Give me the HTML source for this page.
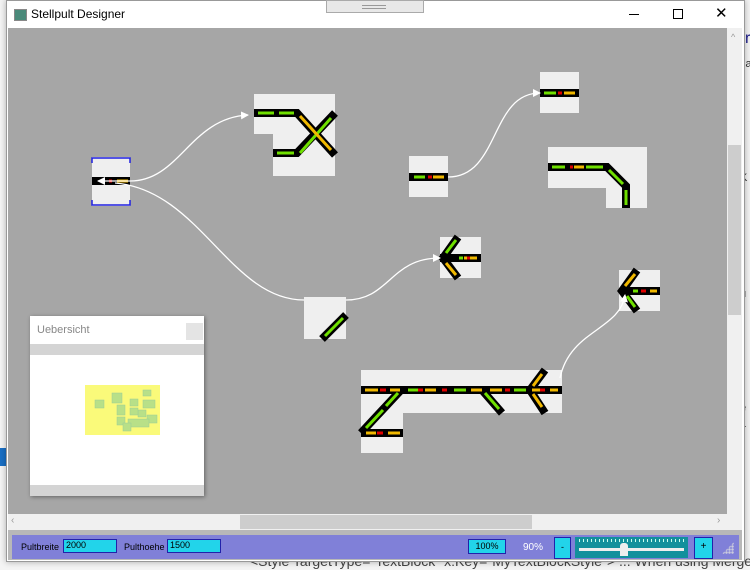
<!DOCTYPE html>
<html><head><meta charset="utf-8"><style>
body{margin:0;width:750px;height:570px;overflow:hidden;background:#fff;font-family:"Liberation Sans",sans-serif;position:relative}
.abs{position:absolute}
</style></head><body>
<div class="abs" style="left:0;top:0;width:750px;height:570px;background:#f4f4f4"></div>
<div class="abs" style="left:0;top:448px;width:8px;height:18px;background:#1a6fc4"></div>
<div class="abs" style="left:745px;top:30px;font-size:16px;color:#1a1a8a">r</div>
<div class="abs" style="left:740px;top:58px;font-size:11px;color:#333">sa</div>
<div class="abs" style="left:740px;top:172px;font-size:11px;color:#333">K</div>
<div class="abs" style="left:740px;top:288px;font-size:11px;color:#333">u</div>
<div class="abs" style="left:740px;top:402px;font-size:11px;color:#333">e</div>
<div class="abs" style="left:740px;top:418px;font-size:11px;color:#333">L</div>
<div class="abs" style="left:250px;top:553px;font-size:14px;color:#444;white-space:nowrap">&lt;Style TargetType="TextBlock" x:Key="MyTextBlockStyle"&gt; ... When using Merged dic</div>
<div class="abs" style="left:6px;top:0;width:737px;height:560px;background:#fff;border:1px solid #999;box-shadow:0 0 6px rgba(0,0,0,.3)"></div>
<div class="abs" style="left:326px;top:0;width:96px;height:11px;background:#e8e8e8;border:1px solid #aaa"></div>
<div class="abs" style="left:362px;top:5px;width:24px;height:2px;border-top:1px solid #999;border-bottom:1px solid #999"></div>
<div class="abs" style="left:14px;top:9px;width:11px;height:10px;background:#4a8a7a;border:1px solid #888"></div>
<div class="abs" style="left:31px;top:7px;font-size:12px;color:#000">Stellpult Designer</div>
<div class="abs" style="left:629px;top:14px;width:10px;height:1px;background:#000"></div>
<div class="abs" style="left:673px;top:9px;width:8px;height:8px;border:1px solid #000"></div>
<div class="abs" style="left:715px;top:4px;font-size:15px;color:#000">✕</div>
<div class="abs" style="left:8px;top:28px;width:719px;height:486px;background:#a6a6a6"></div>
<div class="abs" style="left:727px;top:28px;width:15px;height:486px;background:#f0f0f0"></div>
<div class="abs" style="left:728px;top:145px;width:13px;height:170px;background:#cdcdcd"></div>
<div class="abs" style="left:731px;top:32px;font-size:9px;color:#999">^</div>
<div class="abs" style="left:8px;top:514px;width:734px;height:16px;background:#f0f0f0"></div>
<div class="abs" style="left:240px;top:515px;width:292px;height:14px;background:#cdcdcd"></div>
<div class="abs" style="left:11px;top:515px;font-size:10px;color:#999">‹</div>
<div class="abs" style="left:717px;top:515px;font-size:10px;color:#999">›</div>
<div class="abs" style="left:8px;top:530px;width:734px;height:30px;background:#b8b8b8"></div>
<div class="abs" style="left:12px;top:535px;width:727px;height:24px;background:#8080d8"></div>
<div class="abs" style="left:21px;top:542px;font-size:9px;color:#000">Pultbreite</div>
<div class="abs" style="left:63px;top:539px;width:50px;height:12px;background:#22d4ea;border:1px solid #2222aa;font-size:9px;padding-left:2px">2000</div>
<div class="abs" style="left:124px;top:542px;font-size:9px;color:#000">Pulthoehe</div>
<div class="abs" style="left:167px;top:539px;width:50px;height:12px;background:#22d4ea;border:1px solid #2222aa;font-size:9px;padding-left:2px">1500</div>
<div class="abs" style="left:468px;top:539px;width:36px;height:13px;background:#22d4ea;border:1px solid #2222aa;font-size:9px;text-align:center;line-height:13px">100%</div>
<div class="abs" style="left:523px;top:542px;font-size:10px;color:#fff">90%</div>
<div class="abs" style="left:554px;top:537px;width:15px;height:20px;background:#22d4ea;border:1px solid #2222aa;font-size:9px;text-align:center;line-height:18px">-</div>
<div class="abs" style="left:575px;top:537px;width:113px;height:21px;background:#12909c"></div>
<div class="abs" style="left:579px;top:539px;width:105px;height:3px;background:repeating-linear-gradient(90deg,#cfe 0 1px,transparent 1px 4px)"></div>
<div class="abs" style="left:579px;top:548px;width:105px;height:3px;background:#eee"></div>
<div class="abs" style="left:620px;top:543px;width:8px;height:13px;background:#eee;border-radius:3px 3px 0 0"></div>
<div class="abs" style="left:694px;top:537px;width:17px;height:20px;background:#22d4ea;border:1px solid #2222aa;font-size:10px;text-align:center;line-height:18px">+</div>
<svg class="abs" style="left:0;top:0" width="750" height="570">
<defs>
<marker id="ar" markerWidth="8" markerHeight="8" refX="7" refY="4" orient="auto" markerUnits="userSpaceOnUse"><path d="M0,0L8,4L0,8Z" fill="#fff"/></marker>
</defs>
<g fill="#efefef">
<rect x="92" y="157" width="38" height="49"/>
<path d="M254 94H335V176H273V134H254Z"/>
<rect x="409" y="156" width="39" height="41"/>
<rect x="540" y="72" width="39" height="41"/>
<path d="M548 147H647V208H606V188H548Z"/>
<rect x="440" y="237" width="41" height="41"/>
<rect x="304" y="297" width="42" height="42"/>
<rect x="619" y="270" width="41" height="41"/>
<path d="M361 370H562V413H403V453H361Z"/>
</g>
<g fill="none" stroke="#2020e0" stroke-width="1.5">
<path d="M92 163V158H130V163M92 200V205H130V200"/>
</g>
<g stroke="#000" stroke-width="8" fill="none">
<path d="M92 181H130"/>
<path d="M254 113H297L335 155M273 153H297L335 113"/>
<path d="M409 177H448"/><path d="M540 93H579"/>
<path d="M548 167H607L626 186V208"/>
<path d="M440 258H481M458 237L443 258L458 278"/>
<path d="M322 339L346 315"/>
<path d="M660 291H622M637 270L622 291L637 311"/>
<path d="M361 390H562M361 433H403M361 433L401 390M482 390L502 413M545 370L530 390L545 413"/>
</g>
<g stroke-width="3" fill="none">
<path stroke="#6fe000" d="M258 113H274M279 113H294M277 153H294M300 153L331 118M414 177H425M544 93H556M552 167H565M586 167H603M609 170L623 184M626 190V205M446 253L456 240M627 296L635 307M325 336L343 318M366 428L383 410M386 406L398 393M408 390H420M454 390H466M485 393L499 409M514 390H526"/>
<path stroke="#f0b800" d="M300 116L331 150M433 177H444M564 93H575M574 167H584M464 258H477M446 263L456 275M650 291H657M625 286L635 274M365 390H378M390 390H400M425 390H436M471 390H482M490 390H502M532 390H540M550 390H558M366 433H376M388 433H400M533 386L542 374M533 394L542 407M117 181H128M101 181H103"/>
<path stroke="#e00000" d="M428 177H432M558 93H562M570 167H573M467 258H470M641 291H646M380 390H386M418 390H423M442 390H447M505 390H510M540 390H545M377 433H383M109 181H112"/>
<path stroke="#6fe000" d="M459 258H463M633 291H638"/>
</g>
<g fill="none" stroke="#fff" stroke-width="1.3">
<path d="M130 181C180 181 190 118 248 115" marker-end="url(#ar)"/>
<path d="M448 177C500 177 490 93 540 93" marker-end="url(#ar)"/>
<path d="M115 183C200 190 230 300 304 300"/>
<path d="M346 300C390 300 390 258 440 258" marker-end="url(#ar)"/>
<path d="M560 378C570 330 620 330 625 295" marker-end="url(#ar)"/>
<path d="M130 181L98 181" marker-end="url(#ar)"/>
</g>
</svg>
<div class="abs" style="left:30px;top:316px;width:174px;height:180px;background:#fff;box-shadow:1px 1px 4px rgba(0,0,0,.4)"></div>
<div class="abs" style="left:37px;top:324px;font-size:11px;color:#888">Uebersicht</div>
<div class="abs" style="left:186px;top:323px;width:17px;height:17px;background:#e4e4e4"></div>
<div class="abs" style="left:30px;top:344px;width:174px;height:11px;background:#d4d4d4"></div>
<div class="abs" style="left:30px;top:485px;width:174px;height:11px;background:#d4d4d4"></div>
<div class="abs" style="left:85px;top:385px;width:75px;height:50px;background:#fafa7a"></div>
<svg class="abs" style="left:85px;top:385px" width="75" height="50"><g fill="#b8e088" stroke="#9c9" stroke-width=".5">
<rect x="10" y="15" width="9" height="8"/><rect x="27" y="8" width="10" height="10"/><rect x="45" y="14" width="8" height="7"/><rect x="58" y="5" width="8" height="6"/><rect x="58" y="15" width="12" height="8"/><rect x="53" y="25" width="8" height="7"/><rect x="32" y="20" width="8" height="10"/><rect x="45" y="23" width="8" height="7"/><rect x="32" y="32" width="8" height="8"/><rect x="62" y="30" width="10" height="8"/><rect x="43" y="34" width="21" height="8"/><rect x="38" y="38" width="8" height="8"/></g></svg>
<div class="abs" style="left:722px;top:542px;width:12px;height:12px;background:radial-gradient(#ccd 1px,transparent 1.5px) 0 0/3px 3px;clip-path:polygon(100% 0,100% 100%,0 100%)"></div>
</body></html>
